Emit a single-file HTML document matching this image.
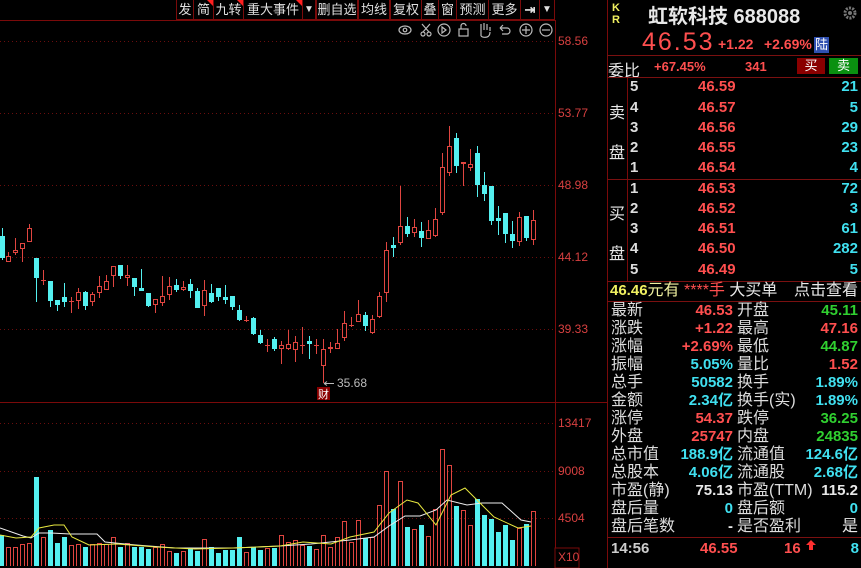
<!DOCTYPE html>
<html><head><meta charset="utf-8"><style>
*{margin:0;padding:0;box-sizing:border-box}
body{width:861px;height:568px;background:#000;overflow:hidden;position:relative;font-family:"Liberation Sans","Noto Sans CJK SC",sans-serif;color:#ddd}
.a{position:absolute;white-space:nowrap}
.tb{position:absolute;top:0;height:20px;border:1px solid #7a0a0a;border-top:none;font-size:13px;line-height:19px;text-align:center;color:#e0e0e0;overflow:hidden}
.tri{position:absolute;right:0;top:0;width:0;height:0;border-top:6px solid #ff2020;border-left:6px solid transparent}
.ax{position:absolute;left:558px;font-size:12px;color:#d84040}
.r{color:#ff4f4f}.c{color:#40e0f0}.g{color:#30d030}.y{color:#f0f060}.w{color:#e8e8e8}
.ob{position:absolute;left:630px;width:228px;height:20px;font-size:15px;font-weight:bold;line-height:20px}
.ob .n{position:absolute;left:0;color:#ddd}
.ob .p{position:absolute;left:68px;color:#ff4f4f}
.ob .v{position:absolute;right:0;color:#40e0f0}
.st{position:absolute;left:611px;width:247px;height:18px;font-size:16px;line-height:18px}
.st .l1{position:absolute;left:0;color:#ddd}
.st .v1{position:absolute;right:125px;font-weight:bold;font-size:15px}
.st .l2{position:absolute;left:126px;color:#ddd}
.st .v2{position:absolute;right:0;font-weight:bold;font-size:15px}
.hl{position:absolute;left:607px;width:254px;height:1px;background:#7a1010}
</style></head><body>

<div class="tb" style="left:176px;width:18px">发</div>
<div class="tb" style="left:193px;width:21px">简<i class="tri"></i></div>
<div class="tb" style="left:213px;width:31px">九转<i class="tri"></i></div>
<div class="tb" style="left:243px;width:60px">重大事件<i class="tri"></i></div>
<div class="tb" style="left:302px;width:14px;font-size:10px">▼</div>
<div class="tb" style="left:316px;width:42px">删自选</div>
<div class="tb" style="left:358px;width:32px">均线</div>
<div class="tb" style="left:390px;width:32px">复权</div>
<div class="tb" style="left:421px;width:18px">叠</div>
<div class="tb" style="left:438px;width:19px">窗</div>
<div class="tb" style="left:456px;width:33px">预测</div>
<div class="tb" style="left:488px;width:33px">更多</div>
<div class="tb" style="left:520px;width:20px;font-weight:bold">⇥</div>
<div class="tb" style="left:539px;width:16px;font-size:10px">▼</div>

<svg class="a" style="left:0;top:0" width="861" height="568">
<g stroke="#7a0a0a" fill="none">
<line x1="0" y1="20.5" x2="555" y2="20.5"/>
<line x1="555.5" y1="20" x2="555.5" y2="568"/>
<line x1="607.5" y1="0" x2="607.5" y2="568"/>
<line x1="0" y1="402.5" x2="607" y2="402.5"/>
<line x1="627.5" y1="77" x2="627.5" y2="281"/>
</g>
<g stroke="#6a0e0e" stroke-dasharray="1 3">
<line x1="0" y1="41.5" x2="555" y2="41.5"/>
<line x1="0" y1="113.5" x2="555" y2="113.5"/>
<line x1="0" y1="185.5" x2="555" y2="185.5"/>
<line x1="0" y1="257.5" x2="555" y2="257.5"/>
<line x1="0" y1="329.5" x2="555" y2="329.5"/>
<line x1="0" y1="423.5" x2="555" y2="423.5"/>
<line x1="0" y1="471.5" x2="555" y2="471.5"/>
<line x1="0" y1="518.5" x2="555" y2="518.5"/>
</g>
<g stroke="#bbb" fill="none" stroke-width="1.2">
<ellipse cx="405" cy="30" rx="6" ry="4"/><circle cx="405" cy="30" r="1.8"/>
<circle cx="423" cy="34" r="2"/><circle cx="429" cy="34" r="2"/><path d="M422 24L429 32M430 24L423 32"/>
<circle cx="444" cy="30" r="6"/><path d="M442 27v6l4-3z"/>
<rect x="459" y="29" width="9" height="7"/><path d="M461 29v-3a2.5 2.5 0 0 1 5 0"/>
<path d="M481 36v-6M481 30v-6M484 30v-7M487 30v-6M490 31v-4M481 36q2 2 6 1q3-1 3-5"/>
<path d="M500 28h7a3 3 0 0 1 0 6h-5M500 28l3-3M500 28l3 3"/>
<circle cx="526" cy="30" r="6"/><path d="M522 30h8M526 26v8"/>
<circle cx="546" cy="30" r="6"/><path d="M542 30h8"/>
</g>
<g shape-rendering="crispEdges">
<path stroke="#54f0f0" d="M2.5 228V260M36.5 258V302M50.5 281V307M57.5 300V311M64.5 283V307M85.5 291V310M120.5 265V279M134.5 278V296M141.5 269V291M148.5 293V307M176.5 279V292M190.5 279V298M197.5 288V308M211.5 284V303M218.5 288V301M225.5 285V304M232.5 296V310M239.5 305V321M253.5 317V335M260.5 330V344M274.5 337V351M309.5 336V359M365.5 312V331M393.5 237V257M407.5 217V237M421.5 222V247M456.5 133V173M477.5 146V197M484.5 172V201M491.5 186V225M498.5 206V235M505.5 213V243M512.5 221V248M526.5 216V241"/>
<path fill="#54f0f0" d="M0 236h5v22h-5zM34 258h5v20h-5zM48 281h5v20h-5zM55 300h5v5h-5zM62 297h5v5h-5zM83 292h5v14h-5zM118 265h5v11h-5zM132 278h5v9h-5zM139 288h5v3h-5zM146 293h5v13h-5zM174 285h5v5h-5zM188 284h5v7h-5zM195 291h5v17h-5zM209 293h5v9h-5zM216 288h5v9h-5zM223 297h5v3h-5zM230 296h5v11h-5zM237 310h5v10h-5zM251 318h5v16h-5zM258 335h5v8h-5zM272 339h5v10h-5zM307 341h5v3h-5zM363 315h5v11h-5zM391 245h5v3h-5zM405 226h5v8h-5zM419 231h5v7h-5zM454 138h5v28h-5zM475 153h5v32h-5zM482 185h5v9h-5zM489 186h5v35h-5zM496 218h5v3h-5zM503 213h5v21h-5zM510 234h5v7h-5zM524 216h5v22h-5z"/>
<path stroke="#e04540" d="M8.5 252V262M15.5 238V255M22.5 243V262M29.5 224V242M43.5 270V285M71.5 297V313M78.5 288V309M92.5 292V306M99.5 276V298M106.5 275V290M113.5 266V287M127.5 265V286M155.5 299V313M162.5 276V306M169.5 277V300M183.5 281V291M204.5 280V316M246.5 316V322M267.5 339V352M281.5 341V364M288.5 330V350M295.5 336V362M302.5 327V354M316.5 339V354M323.5 339V383M330.5 342V353M337.5 329V349M344.5 311V341M351.5 317V327M358.5 300V322M372.5 315V334M379.5 292V318M386.5 242V302M400.5 186V245M414.5 219V237M428.5 220V239M435.5 208V237M442.5 153V215M449.5 126V176M463.5 162V186M470.5 149V171M519.5 212V246M533.5 210V245M41 280.5h5M69 301.5h5M244 320.5h5M265 345.5h5M300 345.5h5M314 345.5h5M349 325.5h5"/>
<path stroke="#e04540" fill="#000" d="M6.5 256.5h4v5h-4zM13.5 250.5h4v2h-4zM20.5 243.5h4v5h-4zM27.5 228.5h4v13h-4zM76.5 292.5h4v8h-4zM90.5 294.5h4v7h-4zM97.5 286.5h4v6h-4zM104.5 281.5h4v8h-4zM111.5 266.5h4v9h-4zM125.5 275.5h4v2h-4zM153.5 299.5h4v5h-4zM160.5 296.5h4v6h-4zM167.5 286.5h4v8h-4zM181.5 287.5h4v2h-4zM202.5 290.5h4v15h-4zM279.5 345.5h4v3h-4zM286.5 344.5h4v4h-4zM293.5 342.5h4v7h-4zM321.5 349.5h4v16h-4zM328.5 347.5h4v1h-4zM335.5 343.5h4v5h-4zM342.5 323.5h4v14h-4zM356.5 314.5h4v7h-4zM370.5 319.5h4v13h-4zM377.5 296.5h4v20h-4zM384.5 250.5h4v42h-4zM398.5 226.5h4v16h-4zM412.5 227.5h4v5h-4zM426.5 230.5h4v8h-4zM433.5 219.5h4v16h-4zM440.5 167.5h4v45h-4zM447.5 146.5h4v26h-4zM461.5 162.5h4v1h-4zM468.5 164.5h4v3h-4zM517.5 217.5h4v24h-4zM531.5 220.5h4v19h-4z"/>
<path fill="#54f0f0" d="M-1 535h5V566h-5zM34 477h5V566h-5zM48 530h5V566h-5zM55 543h5V566h-5zM62 537h5V566h-5zM83 547h5V566h-5zM118 547h5V566h-5zM132 547h5V566h-5zM139 547h5V566h-5zM146 549h5V566h-5zM174 553h5V566h-5zM188 548h5V566h-5zM195 551h5V566h-5zM209 547h5V566h-5zM216 553h5V566h-5zM223 550h5V566h-5zM230 550h5V566h-5zM237 537h5V566h-5zM251 547h5V566h-5zM258 550h5V566h-5zM272 548h5V566h-5zM307 546h5V566h-5zM363 538h5V566h-5zM391 509h5V566h-5zM405 527h5V566h-5zM419 525h5V566h-5zM454 506h5V566h-5zM475 499h5V566h-5zM482 515h5V566h-5zM489 519h5V566h-5zM496 532h5V566h-5zM503 525h5V566h-5zM510 540h5V566h-5zM524 524h5V566h-5z"/>
<path stroke="#e04540" fill="none" d="M6.5 566V547.5h4V566M13.5 566V547.5h4V566M20.5 566V544.5h4V566M27.5 566V543.5h4V566M41.5 566V537.5h4V566M69.5 566V545.5h4V566M76.5 566V544.5h4V566M90.5 566V544.5h4V566M97.5 566V543.5h4V566M104.5 566V544.5h4V566M111.5 566V537.5h4V566M125.5 566V543.5h4V566M153.5 566V547.5h4V566M160.5 566V544.5h4V566M167.5 566V551.5h4V566M181.5 566V551.5h4V566M202.5 566V539.5h4V566M244.5 566V552.5h4V566M265.5 566V548.5h4V566M279.5 566V535.5h4V566M286.5 566V542.5h4V566M293.5 566V540.5h4V566M300.5 566V545.5h4V566M314.5 566V549.5h4V566M321.5 566V535.5h4V566M328.5 566V547.5h4V566M335.5 566V537.5h4V566M342.5 566V521.5h4V566M349.5 566V542.5h4V566M356.5 566V520.5h4V566M370.5 566V537.5h4V566M377.5 566V505.5h4V566M384.5 566V471.5h4V566M398.5 566V481.5h4V566M412.5 566V529.5h4V566M426.5 566V536.5h4V566M433.5 566V509.5h4V566M440.5 566V449.5h4V566M447.5 566V465.5h4V566M461.5 566V510.5h4V566M468.5 566V525.5h4V566M517.5 566V528.5h4V566M531.5 566V511.5h4V566"/>
</g>
<polyline fill="none" stroke="#eee" stroke-width="1" points="0,528 23,536 31,538 39,533 51,533 70,534 97,534 105,542 136,545 175,548 233,548 280,546 311,544 350,540 374,537 389,526 405,516 420,516 436,510 447,500 467,505 482,503 502,503 521,520 531,522"/>
<polyline fill="none" stroke="#e8e840" stroke-width="1" points="0,535 16,538 31,537 39,528 54,525 64,525 72,537 89,545 117,544 156,547 195,549 233,548 280,546 303,542 331,544 350,537 374,532 389,513 407,500 418,503 436,525 451,495 465,488 477,500 494,517 518,528 531,526"/>
<path stroke="#bbb" d="M324 383.5h10M324 383.5l3-2M324 383.5l3 2"/>
<rect x="317" y="387" width="13" height="13" fill="#8a0000"/>
<rect x="555" y="548" width="24" height="20" fill="#000" stroke="#7a0a0a"/>
<path d="M806 545l5-5 5 5h-3v5h-4v-5z" fill="#ff3030"/>
<circle cx="850" cy="13" r="5" fill="none" stroke="#777" stroke-width="3" stroke-dasharray="2 1.2"/>
<circle cx="850" cy="13" r="2" fill="#777"/>
</svg>

<div class="a" style="left:337px;top:376px;font-size:12px;color:#bbb">35.68</div>
<div class="a" style="left:318px;top:386px;font-size:11px;color:#fff">财</div>

<div class="ax" style="top:34px">58.56</div>
<div class="ax" style="top:106px">53.77</div>
<div class="ax" style="top:178px">48.98</div>
<div class="ax" style="top:250px">44.12</div>
<div class="ax" style="top:322px">39.33</div>
<div class="ax" style="top:416px">13417</div>
<div class="ax" style="top:464px">9008</div>
<div class="ax" style="top:511px">4504</div>
<div class="ax" style="top:550px">X10</div>

<div class="a y" style="left:612px;top:2px;font-size:11px;font-weight:bold;line-height:12px">K<br>R</div>
<div class="a w" style="left:648px;top:0px;font-size:20px;font-weight:bold">虹软科技 688088</div>
<div class="a r" style="left:642px;top:28px;font-size:25px;letter-spacing:2px">46.53</div>
<div class="a r" style="left:718px;top:36px;font-size:14px;font-weight:bold">+1.22</div>
<div class="a r" style="left:764px;top:36px;font-size:14px;font-weight:bold">+2.69%</div>
<div class="a" style="left:814px;top:37px;width:15px;height:16px;background:#3050b0;color:#fff;font-size:13px;line-height:16px;text-align:center">陆</div>
<div class="hl" style="top:55px"></div>
<div class="a w" style="left:608px;top:57px;font-size:16px">委比</div>
<div class="a r" style="left:654px;top:59px;font-size:13px;font-weight:bold">+67.45%</div>
<div class="a r" style="left:745px;top:59px;font-size:13px;font-weight:bold">341</div>
<div class="a" style="left:797px;top:58px;width:28px;height:16px;background:#8a0000;color:#fff;font-size:13px;line-height:16px;text-align:center">买</div>
<div class="a" style="left:829px;top:58px;width:29px;height:16px;background:#0a9010;color:#fff;font-size:13px;line-height:16px;text-align:center">卖</div>
<div class="hl" style="top:77px"></div>
<div class="a w" style="left:609px;top:99px;font-size:16px">卖</div>
<div class="a w" style="left:609px;top:139px;font-size:16px">盘</div>
<div class="ob" style="top:77px"><span class="n">5</span><span class="p">46.59</span><span class="v">21</span></div>
<div class="ob" style="top:98px"><span class="n">4</span><span class="p">46.57</span><span class="v">5</span></div>
<div class="ob" style="top:118px"><span class="n">3</span><span class="p">46.56</span><span class="v">29</span></div>
<div class="ob" style="top:138px"><span class="n">2</span><span class="p">46.55</span><span class="v">23</span></div>
<div class="ob" style="top:158px"><span class="n">1</span><span class="p">46.54</span><span class="v">4</span></div>
<div class="hl" style="top:179px"></div>
<div class="a w" style="left:609px;top:200px;font-size:16px">买</div>
<div class="a w" style="left:609px;top:240px;font-size:16px">盘</div>
<div class="ob" style="top:179px"><span class="n">1</span><span class="p">46.53</span><span class="v">72</span></div>
<div class="ob" style="top:199px"><span class="n">2</span><span class="p">46.52</span><span class="v">3</span></div>
<div class="ob" style="top:219px"><span class="n">3</span><span class="p">46.51</span><span class="v">61</span></div>
<div class="ob" style="top:239px"><span class="n">4</span><span class="p">46.50</span><span class="v">282</span></div>
<div class="ob" style="top:260px"><span class="n">5</span><span class="p">46.49</span><span class="v">5</span></div>
<div class="hl" style="top:281px"></div>
<div class="a" style="left:610px;top:282px;font-size:16px;line-height:18px"><b class="y" style="font-size:15px">46.46</b><span style="color:#f0f0a0">元有</span> <span class="r">****手</span> <span class="w">大买单</span></div>
<div class="a w" style="right:3px;top:282px;font-size:16px;line-height:18px">点击查看</div>
<div class="hl" style="top:301px"></div>

<div class="st" style="top:302px"><span class="l1">最新</span><span class="v1 r">46.53</span><span class="l2">开盘</span><span class="v2 g">45.11</span></div>
<div class="st" style="top:320px"><span class="l1">涨跌</span><span class="v1 r">+1.22</span><span class="l2">最高</span><span class="v2 r">47.16</span></div>
<div class="st" style="top:338px"><span class="l1">涨幅</span><span class="v1 r">+2.69%</span><span class="l2">最低</span><span class="v2 g">44.87</span></div>
<div class="st" style="top:356px"><span class="l1">振幅</span><span class="v1 c">5.05%</span><span class="l2">量比</span><span class="v2 r">1.52</span></div>
<div class="st" style="top:374px"><span class="l1">总手</span><span class="v1 c">50582</span><span class="l2">换手</span><span class="v2 c">1.89%</span></div>
<div class="st" style="top:392px"><span class="l1">金额</span><span class="v1 c">2.34亿</span><span class="l2">换手(实)</span><span class="v2 c">1.89%</span></div>
<div class="st" style="top:410px"><span class="l1">涨停</span><span class="v1 r">54.37</span><span class="l2">跌停</span><span class="v2 g">36.25</span></div>
<div class="st" style="top:428px"><span class="l1">外盘</span><span class="v1 r">25747</span><span class="l2">内盘</span><span class="v2 g">24835</span></div>
<div class="st" style="top:446px"><span class="l1">总市值</span><span class="v1 c">188.9亿</span><span class="l2">流通值</span><span class="v2 c">124.6亿</span></div>
<div class="st" style="top:464px"><span class="l1">总股本</span><span class="v1 c">4.06亿</span><span class="l2">流通股</span><span class="v2 c">2.68亿</span></div>
<div class="st" style="top:482px"><span class="l1">市盈(静)</span><span class="v1 w">75.13</span><span class="l2">市盈(TTM)</span><span class="v2 w">115.2</span></div>
<div class="st" style="top:500px"><span class="l1">盘后量</span><span class="v1 c">0</span><span class="l2">盘后额</span><span class="v2 c">0</span></div>
<div class="st" style="top:518px"><span class="l1">盘后笔数</span><span class="v1 w">-</span><span class="l2">是否盈利</span><span class="v2 w" style="font-weight:normal;font-size:16px">是</span></div>
<div class="hl" style="top:537px"></div>
<div class="a" style="left:611px;top:540px;font-size:15px;font-weight:bold;color:#ccc">14:56</div>
<div class="a r" style="left:700px;top:540px;font-size:15px;font-weight:bold">46.55</div>
<div class="a r" style="left:784px;top:540px;font-size:15px;font-weight:bold">16</div>
<div class="a c" style="right:2px;top:540px;font-size:15px;font-weight:bold">8</div>
</body></html>
